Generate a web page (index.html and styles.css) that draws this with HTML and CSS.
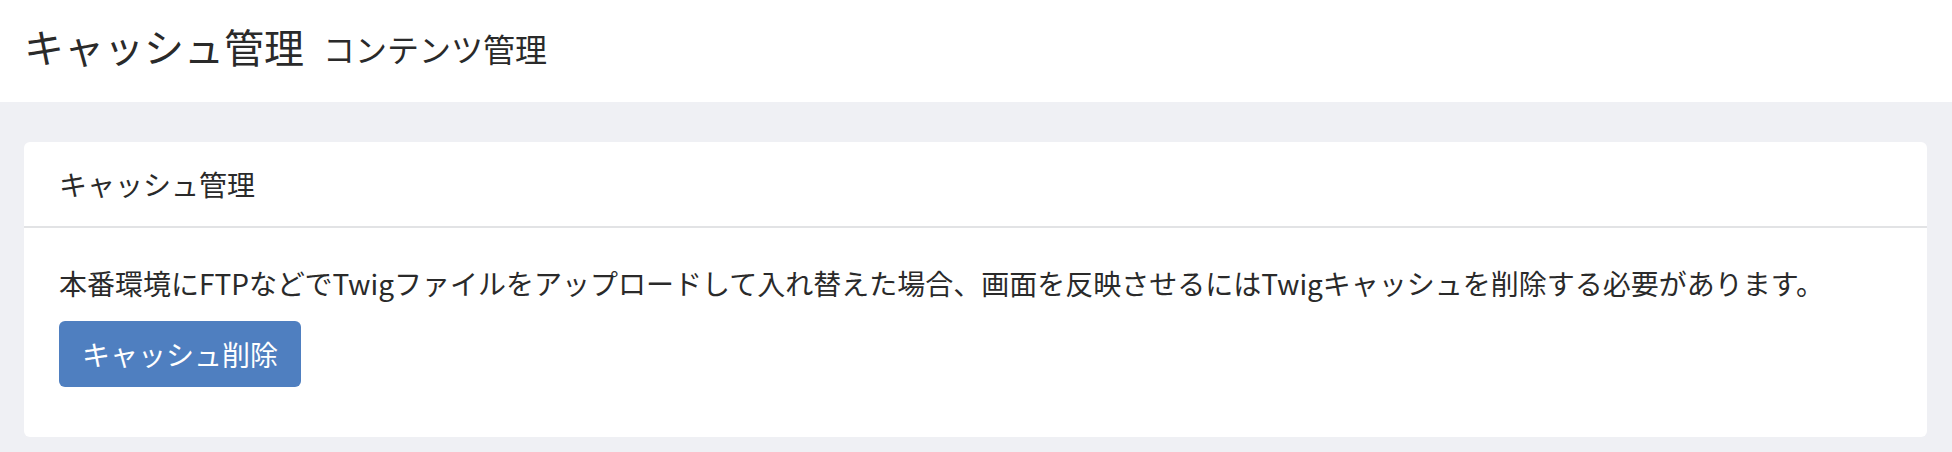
FILE: index.html
```html
<!DOCTYPE html>
<html lang="ja">
<head>
    <meta charset="UTF-8">
    <meta name="viewport" content="width=device-width, initial-scale=1.0">
    <title>キャッシュ管理</title>
    <link rel="stylesheet" href="styles.css">
</head>
<body>
    <header class="page-title">
        <h1 class="page-title__main">キャッシュ管理</h1>
        <span class="page-title__sub">コンテンツ管理</span>
    </header>

    <main class="content">
        <section class="card">
            <div class="card__header">キャッシュ管理</div>
            <div class="card__body">
                <p class="card__text">本番環境にFTPなどでTwigファイルをアップロードして入れ替えた場合、画面を反映させるにはTwigキャッシュを削除する必要があります。</p>
                <button class="btn btn--primary" type="button">キャッシュ削除</button>
            </div>
        </section>
    </main>
</body>
</html>
```

FILE: styles.css
```css
body {
    margin: 0;
    height: 100vh;
    background: #eff0f4;
    color: #2a2a2a;
    font-family: "Noto Sans CJK JP", "Noto Sans", sans-serif;
    overflow: hidden;
}
.page-title {
    height: 102px;
    box-sizing: border-box;
    padding: 0 0 10px 24px;
    display: flex;
    align-items: center;
    gap: 19px;
    background: #fff;
}
.page-title__main {
    margin: 0;
    font-size: 40px;
    font-weight: 400;
    line-height: 1.2;
}
.page-title__sub {
    font-size: 32px;
    line-height: 1.2;
    margin-top: 4px;
}
.content {
    padding: 40px 25px 0 24px;
}
.card {
    background: #fff;
    border-radius: 6px;
}
.card__header {
    height: 86px;
    box-sizing: border-box;
    padding: 0 35px;
    display: flex;
    align-items: center;
    font-size: 28px;
    border-bottom: 2px solid #e2e3e5;
}
.card__body {
    padding: 34px 35px 50px;
}
.card__text {
    margin: 0 0 17px;
    font-size: 28px;
    line-height: 42px;
}
.btn {
    font-family: inherit;
    font-size: 28px;
    line-height: 1;
    height: 66px;
    padding: 0 23px;
    border: none;
    border-radius: 6px;
    cursor: pointer;
}
.btn--primary {
    background: #4f7fc0;
    color: #fff;
}
```
